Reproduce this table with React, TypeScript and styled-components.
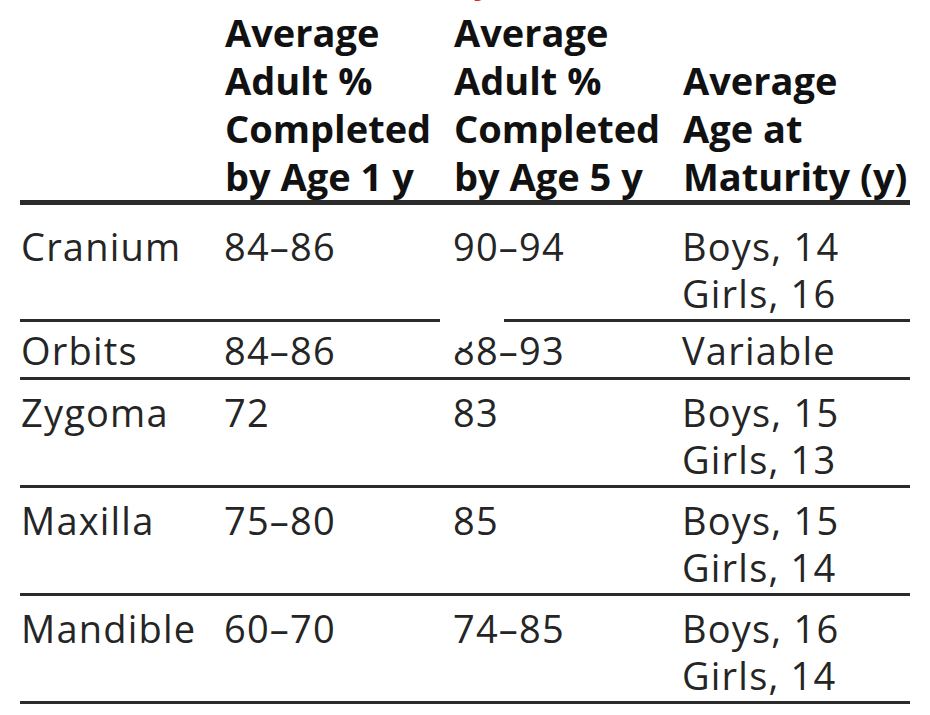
import React from "react";
import styled, { createGlobalStyle } from "styled-components";

const Global = createGlobalStyle`
  html, body { margin: 0; padding: 0; background: #ffffff; }
  body { font-family: "Open Sans", "Noto Sans", sans-serif; color: #1e1e1e; }
`;

const Page = styled.div`
  position: relative;
  width: 930px;
  height: 715px;
  overflow: hidden;
  background: #fff;
`;

const TitleStrip = styled.div`
  height: 8px;
  overflow: hidden;
  display: flex;
  justify-content: flex-end;
  padding-right: 436px;
`;

const TitleText = styled.div`
  margin-top: -43px;
  font-size: 36px;
  font-weight: 700;
  line-height: 44px;
  color: #e0201c;
  white-space: nowrap;
`;

const Table = styled.div`
  margin: 0 20px;
  width: 890px;
  display: flex;
  flex-direction: column;
`;

type RowKind = "head" | "first" | "single" | "double";

const padTop: Record<RowKind, string> = { head: "0", first: "18px", single: "5px", double: "9px" };
const padBottom: Record<RowKind, string> = { head: "0", first: "2px", single: "3px", double: "2px" };

const Row = styled.div<{ $kind: RowKind }>`
  display: grid;
  grid-template-columns: 203px 229px 229px 1fr;
  align-items: ${(p) => (p.$kind === "head" ? "end" : "start")};
  border-bottom: ${(p) => (p.$kind === "head" ? "5px" : "3px")} solid #2b2b2b;
  padding-top: ${(p) => padTop[p.$kind]};
  padding-bottom: ${(p) => padBottom[p.$kind]};
`;

const HeadCell = styled.div`
  padding-left: 2px;
  font-size: 38px;
  font-weight: 700;
  line-height: 48px;
  color: #111;
  white-space: nowrap;
`;

const Cell = styled.div`
  padding-left: 1px;
  font-size: 38px;
  font-weight: 400;
  letter-spacing: 1.2px;
  line-height: 47px;
  color: #252525;
  white-space: nowrap;
`;

const Line = styled.div``;

const Blob = styled.svg`
  position: absolute;
  left: 438px;
  top: 297px;
  width: 70px;
  height: 58px;
`;

type Data = { name: string; y1: string; y5: string; mat: string[] };

const rows: Data[] = [
  { name: "Cranium", y1: "84–86", y5: "90–94", mat: ["Boys, 14", "Girls, 16"] },
  { name: "Orbits", y1: "84–86", y5: "88–93", mat: ["Variable"] },
  { name: "Zygoma", y1: "72", y5: "83", mat: ["Boys, 15", "Girls, 13"] },
  { name: "Maxilla", y1: "75–80", y5: "85", mat: ["Boys, 15", "Girls, 14"] },
  { name: "Mandible", y1: "60–70", y5: "74–85", mat: ["Boys, 16", "Girls, 14"] },
];

export default function App() {
  return (
    <Page>
      <Global />
      <TitleStrip>
        <TitleText>Skeletal Maturity</TitleText>
      </TitleStrip>
      <Table>
        <Row $kind="head">
          <HeadCell />
          <HeadCell>
            <Line>Average</Line>
            <Line>Adult %</Line>
            <Line>Completed</Line>
            <Line>by Age 1 y</Line>
          </HeadCell>
          <HeadCell>
            <Line>Average</Line>
            <Line>Adult %</Line>
            <Line>Completed</Line>
            <Line>by Age 5 y</Line>
          </HeadCell>
          <HeadCell>
            <Line>Average</Line>
            <Line>Age at</Line>
            <Line>Maturity (y)</Line>
          </HeadCell>
        </Row>
        {rows.map((r, i) => (
          <Row
            key={r.name}
            $kind={i === 0 ? "first" : r.mat.length === 1 ? "single" : "double"}
          >
            <Cell>{r.name}</Cell>
            <Cell>{r.y1}</Cell>
            <Cell>{r.y5}</Cell>
            <Cell>
              {r.mat.map((m) => (
                <Line key={m}>{m}</Line>
              ))}
            </Cell>
          </Row>
        ))}
      </Table>
      <Blob viewBox="0 0 70 58">
        <path d="M2 4 Q2 0 8 0 L52 0 Q66 0 66 12 L66 28 Q40 40 16 54 Q4 60 2 48 Z" fill="#fff" />
      </Blob>
    </Page>
  );
}
